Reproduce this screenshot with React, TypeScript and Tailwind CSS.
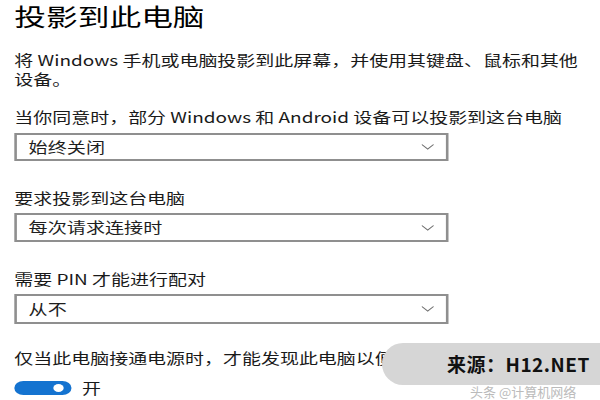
import React from 'react';

const font = { fontFamily: '"Noto Sans CJK SC", "Noto Sans", sans-serif' };

const Chevron = () => (
  <svg width="10" height="6" viewBox="0 0 10 6" fill="none">
    <polyline points="0.5,0.5 5,5 9.5,0.5" stroke="#707070" strokeWidth="1" />
  </svg>
);

const Select = ({ value, h }: { value: string; h: string }) => (
  <div className={`w-[334px] ${h} border-2 border-[#8f8f8f] bg-white flex items-center justify-between pl-[9px] pr-[9px]`}>
    <span className="text-[14.7px] text-[#1f1f1f] leading-none">{value}</span>
    <Chevron />
  </div>
);

export default function App() {
  return (
    <div className="relative w-[600px] h-[400px] overflow-hidden bg-white" style={font}>
      {/* screenshot is stretched horizontally */}
      <div className="w-[462px] origin-top-left scale-x-[1.3] pl-[11px] flex flex-col text-[#1a1a1a]">
        <h1 className="text-[24.4px] leading-[32px] text-black font-normal">投影到此电脑</h1>

        <p className="mt-[18px] text-[14.6px] leading-[19px] whitespace-nowrap">
          将 Windows 手机或电脑投影到此屏幕，并使用其键盘、鼠标和其他
          <br />
          设备。
        </p>

        <div className="mt-[19px] text-[14.6px] leading-[19px] whitespace-nowrap">
          当你同意时，部分 Windows 和 Android 设备可以投影到这台电脑
        </div>
        <div className="mt-[7px]">
          <Select value="始终关闭" h="h-[28px]" />
        </div>

        <div className="mt-[27px] text-[14.6px] leading-[19px]">要求投影到这台电脑</div>
        <div className="mt-[6px]">
          <Select value="每次请求连接时" h="h-[29px]" />
        </div>

        <div className="mt-[27px] text-[14.6px] leading-[19px]">需要 PIN 才能进行配对</div>
        <div className="mt-[6px]">
          <Select value="从不" h="h-[30px]" />
        </div>

        <div className="mt-[24px] text-[14.6px] leading-[19px] whitespace-nowrap">
          仅当此电脑接通电源时，才能发现此电脑以便进行投影
        </div>
        <div className="mt-[14px] flex items-center gap-[8px]">
          <div className="w-[44px] h-[14px] rounded-full bg-[#1473d0] flex items-center justify-end pr-[6px]">
            <div className="w-[8px] h-[8px] rounded-full bg-white" />
          </div>
          <span className="text-[14.6px] leading-none">开</span>
        </div>
      </div>

      {/* watermark */}
      <div className="absolute left-[382px] top-[343px] w-[230px] h-[42px] rounded-l-full bg-[#d6d6d6] flex items-center pl-[65px]">
        <span className="text-[19px] font-bold text-[#111] tracking-[0.5px]">来源：H12.NET</span>
      </div>
      <div className="absolute left-[470px] top-[385px] text-[13px] leading-none text-[#bbbbbb] whitespace-nowrap">
        头条 @计算机网络
      </div>
    </div>
  );
}
